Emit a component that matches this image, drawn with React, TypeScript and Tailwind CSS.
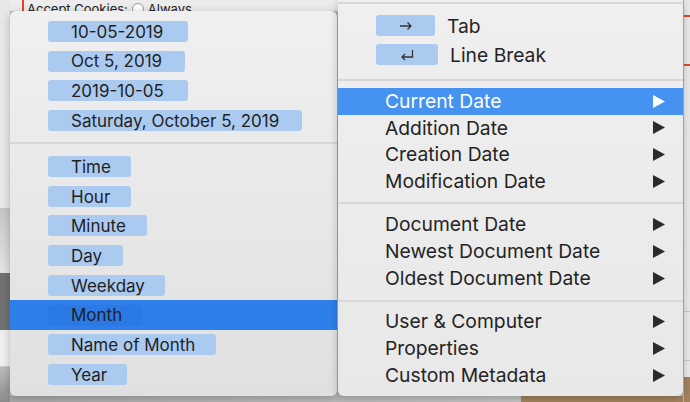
import React from 'react';

type Chip = { label: string; w: number };

const dateChips: Chip[] = [
  { label: '10-05-2019', w: 140 },
  { label: 'Oct 5, 2019', w: 137 },
  { label: '2019-10-05', w: 140 },
  { label: 'Saturday, October 5, 2019', w: 254 },
];

const partChips: Chip[] = [
  { label: 'Time', w: 83 },
  { label: 'Hour', w: 83 },
  { label: 'Minute', w: 99 },
  { label: 'Day', w: 75 },
  { label: 'Weekday', w: 117 },
  { label: 'Month', w: 95 },
  { label: 'Name of Month', w: 168 },
  { label: 'Year', w: 79 },
];

const groups: string[][] = [
  ['Current Date', 'Addition Date', 'Creation Date', 'Modification Date'],
  ['Document Date', 'Newest Document Date', 'Oldest Document Date'],
  ['User & Computer', 'Properties', 'Custom Metadata'],
];

function Triangle({ white }: { white?: boolean }) {
  return (
    <svg width="12" height="13" viewBox="0 0 12 13">
      <path d="M0 0 L12 6.5 L0 13 Z" fill={white ? '#ffffff' : '#2b2b2b'} />
    </svg>
  );
}

function ChipRow({ chip, selected }: { chip: Chip; selected?: boolean }) {
  return (
    <div className={`flex h-[29.7px] items-center ${selected ? 'bg-[#2f7fea]' : ''}`}>
      <div
        className={`ml-[38px] flex h-[21px] items-center rounded-[3px] pl-[23px] pt-[2px] ${
          selected ? 'bg-[#2a79e4]' : 'bg-[#abcaf0]'
        }`}
        style={{ width: chip.w }}
      >
        {chip.label}
      </div>
    </div>
  );
}

function MenuRow({ label, selected }: { label: string; selected?: boolean }) {
  return (
    <div
      className={`flex h-[26.67px] items-center justify-between pl-[47px] pr-[18px] ${
        selected ? 'bg-[#4592f0] text-white' : 'text-[#242424]'
      }`}
    >
      <span>{label}</span>
      <Triangle white={selected} />
    </div>
  );
}

function Separator({ top, bottom }: { top: string; bottom: string }) {
  return <div className={`${top} ${bottom} h-[2px] bg-[#d7d7d7]`} />;
}

export default function App() {
  return (
    <div className="relative h-[402px] w-[690px] overflow-hidden bg-[#bdbdbd] font-['Inter',sans-serif]">
      {/* window behind the menus */}
      <div className="flex h-full">
        <div className="flex w-[10px] flex-col">
          <div className="h-[208px] bg-[#e8e8e8]" />
          <div className="h-[65px] bg-gradient-to-b from-[#c6c6c6] to-[#e4e4e4]" />
          <div className="h-[57px] bg-[#727272]" />
          <div className="h-[37px] bg-[#f0f0f0] border-b border-[#c9c9c9]" />
          <div className="flex-1 bg-gradient-to-b from-[#bcbcbc] to-[#8c8c8c]" />
        </div>
        <div className="flex flex-1 flex-col">
          <div className="flex h-[11px] overflow-hidden bg-[#ececec]">
            <div className="ml-[12px] h-full w-[2px] bg-[#e0452f]" />
            <div className="ml-[3px] mt-[1px] flex items-start text-[13px] leading-[16px] text-[#222]">
              <span>Accept Cookies:</span>
              <span className="ml-[4px] mt-[2px] h-[12px] w-[12px] rounded-full border border-[#9c9c9c] bg-white" />
              <span className="ml-[4px]">Always</span>
            </div>
          </div>
          <div className="flex-1" />
          <div className="flex h-[6px]">
            <div className="flex-1 bg-gradient-to-r from-[#a9a9a9] to-[#c4c4c4]" />
            <div className="w-[162px] bg-[#a3835e]" />
          </div>
        </div>
        <div className="flex w-[7px] flex-col border-l border-[#b5b5b5] bg-[#e9e9e9]">
          <div className="mt-[15px] h-[2px] bg-[#e0452f]" />
          <div className="mt-[47px] h-[2px] bg-[#e0452f]" />
          <div className="mt-[245px] h-[1px] bg-[#c8c8c8]" />
          <div className="mt-[48px] h-[1px] bg-[#c8c8c8]" />
          <div className="mt-[16px] flex-1 bg-[#a3835e]" />
        </div>
      </div>

      {/* date format submenu */}
      <div className="absolute left-[10px] top-[11px] h-[385px] w-[327px] rounded-[6px] bg-gradient-to-b from-[#f0f0f0] to-[#e0e0e0] pt-[5.6px] text-[17px] text-[#1f1f1f] shadow-[0_2px_8px_rgba(0,0,0,0.25)]">
        {dateChips.map((c) => (
          <ChipRow key={c.label} chip={c} />
        ))}
        <Separator top="mt-[6.6px]" bottom="mb-[7.8px]" />
        {partChips.map((c) => (
          <ChipRow key={c.label} chip={c} selected={c.label === 'Month'} />
        ))}
      </div>

      {/* main placeholder menu */}
      <div className="absolute left-[338px] top-0 h-[396px] w-[345px] rounded-b-[6px] bg-gradient-to-b from-[#efefef] to-[#e8e8e8] pt-[2px] text-[19.3px] shadow-[0_2px_8px_rgba(0,0,0,0.25)]">
        <div className="h-[2px] bg-[#d7d7d7]" />
        <div className="ml-[38px] mt-[11px] flex h-[21px] items-center">
          <div className="flex h-[21px] w-[59px] items-center justify-center rounded-[3px] bg-[#abcaf0]">
            <svg width="14" height="10" viewBox="0 0 14 10">
              <path d="M1 5 H12 M8.5 1.5 L12 5 L8.5 8.5" fill="none" stroke="#333" strokeWidth="1.3" />
            </svg>
          </div>
          <span className="ml-[12px] pt-[2px] text-[#242424]">Tab</span>
        </div>
        <div className="ml-[38px] mt-[8px] flex h-[21px] items-center">
          <div className="flex h-[21px] w-[62px] items-center justify-center rounded-[3px] bg-[#abcaf0]">
            <svg width="14" height="12" viewBox="0 0 14 12">
              <path d="M12.5 1 V8 H2 M5 5 L2 8 L5 11" fill="none" stroke="#333" strokeWidth="1.3" />
            </svg>
          </div>
          <span className="ml-[12px] pt-[2px] text-[#242424]">Line Break</span>
        </div>
        <Separator top="mt-[14px]" bottom="mb-[7px]" />
        {groups.map((g, gi) => (
          <div key={gi}>
            {gi > 0 && <Separator top={gi === 1 ? 'mt-[7px]' : 'mt-[8px]'} bottom={gi === 1 ? 'mb-[8px]' : 'mb-[7px]'} />}
            {g.map((label) => (
              <MenuRow key={label} label={label} selected={label === 'Current Date'} />
            ))}
          </div>
        ))}
      </div>
    </div>
  );
}
